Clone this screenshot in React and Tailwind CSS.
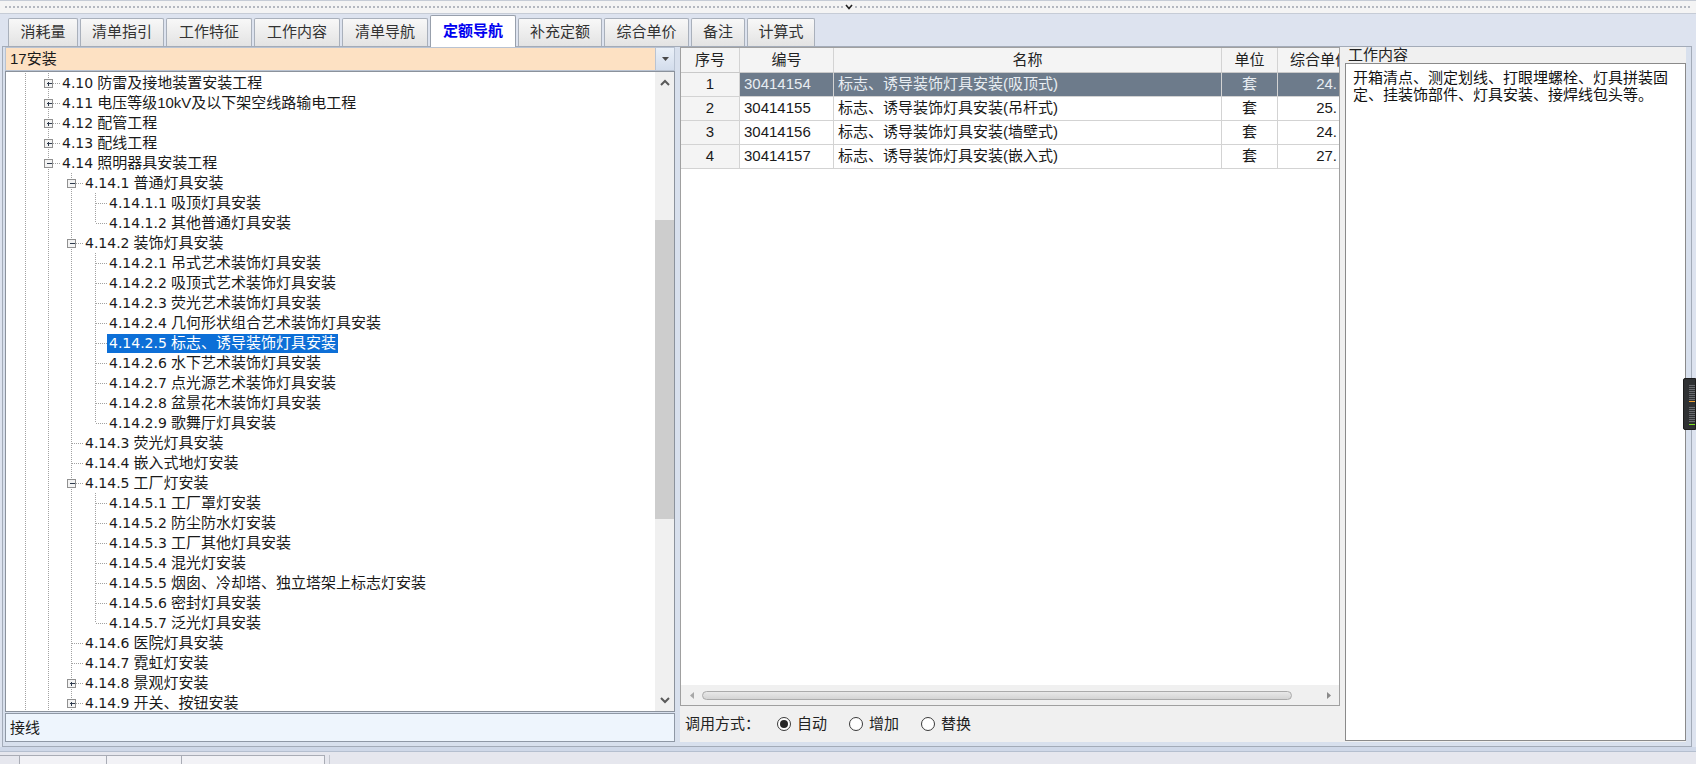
import React from "react";

const TREE = [
  [1, "4.10 防雷及接地装置安装工程", "+"],
  [1, "4.11 电压等级10kV及以下架空线路输电工程", "+"],
  [1, "4.12 配管工程", "+"],
  [1, "4.13 配线工程", "+"],
  [1, "4.14 照明器具安装工程", "-"],
  [2, "4.14.1 普通灯具安装", "-"],
  [3, "4.14.1.1 吸顶灯具安装"],
  [3, "4.14.1.2 其他普通灯具安装"],
  [2, "4.14.2 装饰灯具安装", "-"],
  [3, "4.14.2.1 吊式艺术装饰灯具安装"],
  [3, "4.14.2.2 吸顶式艺术装饰灯具安装"],
  [3, "4.14.2.3 荧光艺术装饰灯具安装"],
  [3, "4.14.2.4 几何形状组合艺术装饰灯具安装"],
  [3, "4.14.2.5 标志、诱导装饰灯具安装", null, true],
  [3, "4.14.2.6 水下艺术装饰灯具安装"],
  [3, "4.14.2.7 点光源艺术装饰灯具安装"],
  [3, "4.14.2.8 盆景花木装饰灯具安装"],
  [3, "4.14.2.9 歌舞厅灯具安装"],
  [2, "4.14.3 荧光灯具安装"],
  [2, "4.14.4 嵌入式地灯安装"],
  [2, "4.14.5 工厂灯安装", "-"],
  [3, "4.14.5.1 工厂罩灯安装"],
  [3, "4.14.5.2 防尘防水灯安装"],
  [3, "4.14.5.3 工厂其他灯具安装"],
  [3, "4.14.5.4 混光灯安装"],
  [3, "4.14.5.5 烟囱、冷却塔、独立塔架上标志灯安装"],
  [3, "4.14.5.6 密封灯具安装"],
  [3, "4.14.5.7 泛光灯具安装"],
  [2, "4.14.6 医院灯具安装"],
  [2, "4.14.7 霓虹灯安装"],
  [2, "4.14.8 景观灯安装", "+"],
  [2, "4.14.9 开关、按钮安装", "+"],
];

const LEVELS = [...TREE.map((r) => r[0]), 2, 1, 0];
const X = [19, 42, 65, 89];

function hasNext(i, k) {
  for (let j = i + 1; j < LEVELS.length; j++) {
    if (LEVELS[j] < k) return false;
    if (LEVELS[j] === k) return true;
  }
  return false;
}

const LINE = "#a2a2a2";

function TreeRow({ i, level, text, exp, sel }) {
  const w = X[level] + 12;
  const segs = [];
  for (let k = 0; k < level; k++) {
    if (hasNext(i, k)) {
      segs.push(<line key={"v" + k} x1={X[k] + 0.5} y1={0} x2={X[k] + 0.5} y2={20} stroke={LINE} strokeDasharray="1 1" />);
    }
  }
  const x = X[level];
  segs.push(<line key="up" x1={x + 0.5} y1={0} x2={x + 0.5} y2={10} stroke={LINE} strokeDasharray="1 1" />);
  if (hasNext(i, level)) {
    segs.push(<line key="dn" x1={x + 0.5} y1={10} x2={x + 0.5} y2={20} stroke={LINE} strokeDasharray="1 1" />);
  }
  segs.push(<line key="h" x1={exp ? x + 5 : x + 1} y1={10.5} x2={x + 12} y2={10.5} stroke={LINE} strokeDasharray="1 1" />);
  if (exp) {
    segs.push(
      <g key="box">
        <rect x={x - 3.5} y={6.5} width={8} height={8} fill="#f3f3f3" stroke="#919191" />
        <line x1={x - 1.5} y1={10.5} x2={x + 3.5} y2={10.5} stroke="#2e3a4c" />
        {exp === "+" && <line x1={x + 0.5} y1={8.5} x2={x + 0.5} y2={13} stroke="#2e3a4c" />}
      </g>
    );
  }
  const sp = text.indexOf(" ");
  const num = text.slice(0, sp);
  const rest = text.slice(sp + 1);
  return (
    <div className="flex h-[20px] items-center whitespace-nowrap">
      <svg width={w} height={20} className="shrink-0" shapeRendering="crispEdges">
        {segs}
      </svg>
      <span className={"flex items-center h-[19px] mt-[1px] px-[2px] " + (sel ? "bg-[#0d6fd7] text-white" : "")}>
        <span className="font-['DejaVu_Sans',sans-serif] text-[14px]">{num}</span>
        <span className="ml-[4px]">{rest}</span>
      </span>
    </div>
  );
}

function Chevron({ dir }) {
  return (
    <svg width="10" height="7" viewBox="0 0 10 7">
      {dir === "up" ? (
        <polyline points="1,6 5,2 9,6" fill="none" stroke="#5a5a5a" strokeWidth="2" />
      ) : (
        <polyline points="1,1 5,5 9,1" fill="none" stroke="#5a5a5a" strokeWidth="2" />
      )}
    </svg>
  );
}

const TABS = [
  ["消耗量", 70],
  ["清单指引", 84],
  ["工作特征", 86],
  ["工作内容", 86],
  ["清单导航", 86],
  ["定额导航", 86, true],
  ["补充定额", 84],
  ["综合单价", 85],
  ["备注", 54],
  ["计算式", 68],
];

const ROWS = [
  ["1", "30414154", "标志、诱导装饰灯具安装(吸顶式)", "套", "24.", true],
  ["2", "30414155", "标志、诱导装饰灯具安装(吊杆式)", "套", "25."],
  ["3", "30414156", "标志、诱导装饰灯具安装(墙壁式)", "套", "24."],
  ["4", "30414157", "标志、诱导装饰灯具安装(嵌入式)", "套", "27."],
];

function Radio({ checked, label, className }) {
  return (
    <div className={"flex items-center " + (className || "")}>
      <div className="w-[14px] h-[14px] rounded-full border border-[#3a3a3a] bg-white flex items-center justify-center">
        {checked && <div className="w-[8px] h-[8px] rounded-full bg-[#262626]" />}
      </div>
      <span className="ml-[6px]">{label}</span>
    </div>
  );
}

export default function App() {
  return (
    <div className="w-[1696px] h-[764px] overflow-hidden bg-[#dde3ef] flex flex-col relative font-['Liberation_Sans','Noto_Sans_CJK_SC',sans-serif] text-[15px] text-[#1a1a1a]">
      {/* top strip */}
      <div className="h-[14px] shrink-0 flex items-center bg-[#f4f4f4] border-y border-[#c6ccd6] pl-[5px] pr-[6px]">
        <div className="w-[838px] border-t-2 border-dotted border-[#b4b8c0]" />
        <div className="w-[12px] flex justify-center">
          <svg width="8" height="6" viewBox="0 0 8 6">
            <polyline points="1,1 4,4.5 7,1" fill="none" stroke="#222" strokeWidth="1.6" />
          </svg>
        </div>
        <div className="flex-1 border-t-2 border-dotted border-[#b4b8c0]" />
      </div>

      {/* tabs */}
      <div className="h-[32px] shrink-0 flex items-end pl-[8px] gap-[2px]">
        {TABS.map(([t, w, act]) => (
          <div
            key={t}
            style={{ width: w }}
            className={
              "shrink-0 flex items-center justify-center border border-b-0 rounded-t-[2px] " +
              (act
                ? "h-[32px] -mb-px relative z-10 bg-white border-[#98a0ac] text-[#0000f0] font-bold"
                : "h-[28px] bg-linear-to-b from-[#f8f8f8] to-[#e3e3e3] border-[#a9b0bb] text-[#333]")
            }
          >
            {t}
          </div>
        ))}
      </div>

      {/* frame */}
      <div className="h-[701px] w-[1690px] ml-[2px] shrink-0 border border-[#a3abb8] bg-[#d8e0ed] flex pl-[2px] pr-[5px] pb-[4px]">
        {/* left column */}
        <div className="w-[670px] shrink-0 flex flex-col">
          <div className="h-[24px] flex border border-[#b9c3d2] bg-[#fde1c3]">
            <div className="flex-1 pl-[4px] leading-[22px]">17安装</div>
            <div className="w-[19px] border-l border-[#b9c3d2] bg-linear-to-b from-[#eaf0f8] to-[#d3ddec] flex items-center justify-center">
              <svg width="7" height="4" viewBox="0 0 7 4">
                <polygon points="0,0 7,0 3.5,4" fill="#4a4a4a" />
              </svg>
            </div>
          </div>
          <div className="h-[641px] flex border border-[#8b929c] bg-white">
            <div className="flex-1 overflow-hidden pt-[1px]">
              {TREE.map((r, i) => (
                <TreeRow key={i} i={i} level={r[0]} text={r[1]} exp={r[2]} sel={r[3]} />
              ))}
            </div>
            <div className="w-[19px] bg-[#f0f0f0] flex flex-col">
              <div className="h-[20px] flex items-center justify-center">
                <Chevron dir="up" />
              </div>
              <div className="h-[128px]" />
              <div className="h-[299px] bg-[#cdcdcd]" />
              <div className="flex-1" />
              <div className="h-[22px] flex items-center justify-center">
                <Chevron dir="down" />
              </div>
            </div>
          </div>
          <div className="mt-[1px] h-[29px] border border-[#8f98a5] bg-[#eef5fd] pl-[4px] leading-[27px]">接线</div>
        </div>

        <div className="w-[5px] shrink-0" />

        {/* middle + right */}
        <div className="flex-1 bg-[#f0f0f0] flex">
          <div className="w-[660px] shrink-0 flex flex-col">
            <div className="flex-1 border border-[#a0a0a0] bg-white flex flex-col overflow-hidden">
              <div className="h-[25px] flex shrink-0 bg-[#f4f4f4] border-b border-[#c9c9c9] text-[#222]">
                <div className="w-[59px] shrink-0 border-r border-[#d3d3d3] flex items-center justify-center">序号</div>
                <div className="w-[94px] shrink-0 border-r border-[#d3d3d3] flex items-center justify-center">编号</div>
                <div className="w-[388px] shrink-0 border-r border-[#d3d3d3] flex items-center justify-center">名称</div>
                <div className="w-[56px] shrink-0 border-r border-[#d3d3d3] flex items-center justify-center">单位</div>
                <div className="w-[84px] shrink-0 flex items-center justify-center whitespace-nowrap">综合单价</div>
              </div>
              {ROWS.map(([n, code, name, unit, price, sel]) => (
                <div key={n} className="h-[24px] flex shrink-0 border-b border-[#d3d3d3]">
                  <div className="w-[59px] shrink-0 border-r border-[#d3d3d3] bg-[#f4f4f4] flex items-center justify-center">{n}</div>
                  <div className={"flex " + (sel ? "bg-[#6d7b8b] text-[#e8edf2]" : "")}>
                    <div className="w-[94px] shrink-0 border-r border-[#d3d3d3] pl-[4px] flex items-center">{code}</div>
                    <div className="w-[388px] shrink-0 border-r border-[#d3d3d3] pl-[4px] flex items-center whitespace-nowrap">{name}</div>
                    <div className="w-[56px] shrink-0 border-r border-[#d3d3d3] flex items-center justify-center">{unit}</div>
                    <div className="w-[84px] shrink-0 flex items-center">
                      <div className="w-[59px] text-right">{price}</div>
                    </div>
                  </div>
                </div>
              ))}
              <div className="flex-1" />
              <div className="h-[20px] shrink-0 bg-[#f0f0f0] flex items-center">
                <div className="w-[21px] flex justify-center">
                  <svg width="4" height="7" viewBox="0 0 4 7">
                    <polygon points="4,0 4,7 0,3.5" fill="#a8a8a8" />
                  </svg>
                </div>
                <div className="w-[590px] h-[9px] rounded-full border border-[#aaaaaa] bg-linear-to-b from-[#e8e8e8] to-[#d4d4d4]" />
                <div className="flex-1" />
                <div className="w-[20px] flex justify-center">
                  <svg width="4" height="7" viewBox="0 0 4 7">
                    <polygon points="0,0 0,7 4,3.5" fill="#8a8a8a" />
                  </svg>
                </div>
              </div>
            </div>
            <div className="h-[36px] shrink-0 flex items-center pl-[5px] text-[#222]">
              <span>调用方式：</span>
              <Radio checked label="自动" className="ml-[17px]" />
              <Radio label="增加" className="ml-[22px]" />
              <Radio label="替换" className="ml-[22px]" />
            </div>
          </div>

          <div className="w-[5px] shrink-0" />

          <div className="flex-1 flex flex-col">
            <div className="h-[16px] shrink-0 pl-[3px] leading-[16px] text-[#222]">工作内容</div>
            <div className="flex-1 mb-[1px] border border-[#8a8a8a] bg-white px-[7px] pt-[5px] leading-[17px] text-[#111]">
              开箱清点、测定划线、打眼埋螺栓、灯具拼装固定、挂装饰部件、灯具安装、接焊线包头等。
            </div>
          </div>
        </div>
      </div>

      {/* bottom strip */}
      <div className="h-[5px] shrink-0 bg-[#cfd8e8] border-b border-[#b5bfcf]" />
      <div className="flex-1 bg-[#e6e7ee] flex items-end">
        <div className="h-[9px] w-[20px] border-t border-r border-[#a9acb5]" />
        <div className="h-[9px] w-[87px] border-t border-r border-[#a9acb5] bg-[#f2f2f6]" />
        <div className="h-[9px] w-[75px] border-t border-r border-[#a9acb5] bg-[#f2f2f6]" />
        <div className="h-[9px] w-[143px] border-t border-r border-[#a9acb5] bg-[#f2f2f6]" />
        <div className="h-[9px] w-[5px] border-r border-[#c3c6ce]" />
      </div>

      {/* right-edge handle */}
      <div className="absolute left-[1683px] top-[378px] w-[13px] h-[52px] rounded-l-[2px] bg-[#2f3133] border border-[#1c1c1c]">
        <svg width="13" height="52" viewBox="0 0 13 52" shapeRendering="crispEdges">
          {[6, 8, 10, 12, 14, 16, 18, 20].map((y) => (
            <line key={y} x1="5" y1={y + 0.5} x2="11" y2={y + 0.5} stroke="#6a6c70" />
          ))}
          <line x1="5" y1="22.5" x2="11" y2="22.5" stroke="#f0a030" />
          {[28, 30, 32, 34, 36, 38, 40, 42].map((y) => (
            <line key={y} x1="5" y1={y + 0.5} x2="11" y2={y + 0.5} stroke="#6a6c70" />
          ))}
          <line x1="5" y1="45.5" x2="11" y2="45.5" stroke="#7ee020" />
        </svg>
      </div>
    </div>
  );
}
